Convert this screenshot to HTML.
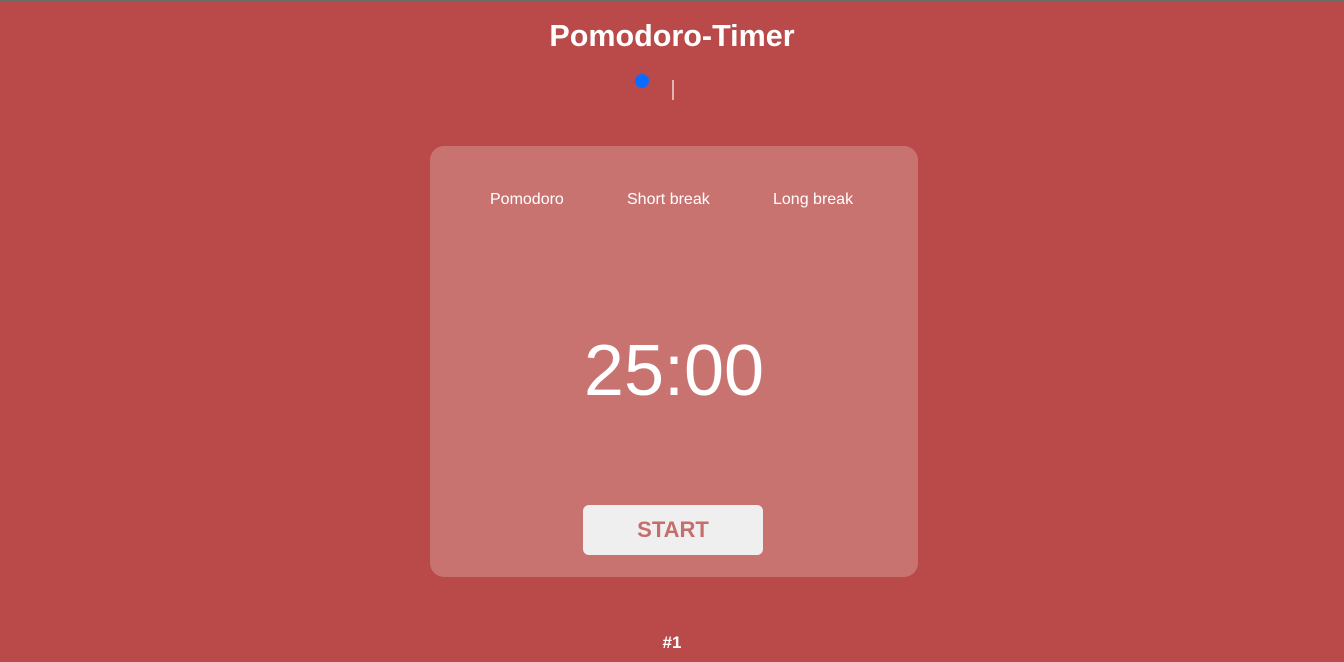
<!DOCTYPE html>
<html><head><style>
html,body{margin:0;padding:0;}
body{width:1344px;height:662px;background:#ba4949;position:relative;overflow:hidden;font-family:"Liberation Sans",Arial,sans-serif;color:#fff;}
.top{position:absolute;left:0;top:0;width:1344px;height:2px;background:#6b6b6b;}
h1{position:absolute;top:19px;left:0;width:1344px;text-align:center;margin:0;font-size:30.5px;font-weight:bold;line-height:34px;}
.dot{position:absolute;left:635px;top:74px;width:14px;height:14px;border-radius:50%;background:#0a6cff;}
.bar{position:absolute;left:672px;top:80px;width:2px;height:20px;background:#e3b2b2;}
.card{position:absolute;left:430px;top:146px;width:488px;height:431px;border-radius:14px;background:#c97370;}
.tab{position:absolute;top:45px;font-size:16px;}
.time{position:absolute;top:185px;left:0;width:488px;text-align:center;font-size:72px;line-height:80px;}
.btn{position:absolute;left:153px;top:359px;width:180px;height:50px;border-radius:6px;background:#efefef;color:#c66e6c;font-weight:bold;font-size:22px;text-align:center;line-height:50px;}
.num{position:absolute;top:633px;left:0;width:1344px;text-align:center;font-size:17px;font-weight:bold;}
</style></head><body>
<div class="top"></div>
<h1>Pomodoro-Timer</h1>
<div class="dot"></div><div class="bar"></div>
<div class="card">
<div class="tab" style="left:60px">Pomodoro</div>
<div class="tab" style="left:197px">Short break</div>
<div class="tab" style="left:343px">Long break</div>
<div class="time">25:00</div>
<div class="btn">START</div>
</div>
<div class="num">#1</div>
</body></html>
